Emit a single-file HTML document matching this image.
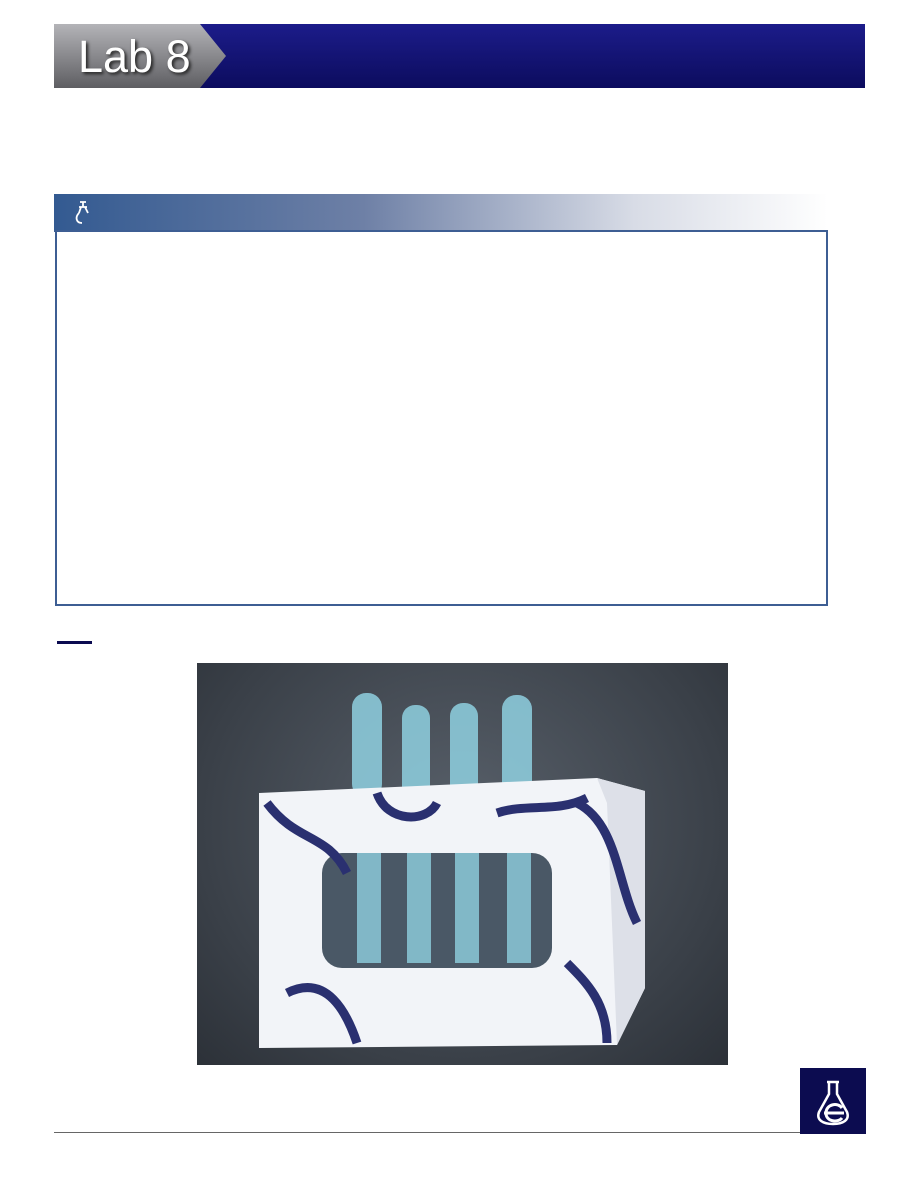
<!DOCTYPE html>
<html><head><style>
body{margin:0;width:918px;height:1188px;background:#fff;position:relative;font-family:"Liberation Sans",sans-serif;overflow:hidden}
.a{position:absolute}
</style></head><body>
<div class="a" style="left:54px;top:24px;width:811px;height:64px;background:linear-gradient(#1c1c8a,#0c0c5e)"></div>
<svg class="a" style="left:54px;top:24px" width="175" height="64"><defs><linearGradient id="g" x1="0" y1="0" x2="0" y2="1"><stop offset="0" stop-color="#b4b4b8"/><stop offset="1" stop-color="#5e5e62"/></linearGradient></defs><polygon points="0,0 146,0 172,32 146,64 0,64" fill="url(#g)"/></svg>
<div class="a" style="left:78px;top:30px;font-size:45px;color:#fff;text-shadow:2px 2px 3px #222;line-height:54px">Lab 8</div>
<div class="a" style="left:54px;top:194px;width:774px;height:37px;background:linear-gradient(90deg,#335a91,#6e80a6 40%,#d8dce6 75%,#fff)"></div>
<div class="a" style="left:54px;top:230px;width:774px;height:2px;background:#3d5e93"></div>
<svg class="a" style="left:72px;top:199px" width="20" height="28"><path d="M8 3h6M11 3v5M7 8h8M9 8l-2 6M13 8l3 6M7 14c-4 4-3 10 3 10" stroke="#fff" stroke-width="1.8" fill="none"/></svg>
<div class="a" style="left:55px;top:232px;width:769px;height:372px;border:2px solid #3d5e93;border-top:none"></div>
<div class="a" style="left:57px;top:641px;width:35px;height:3px;background:#0a0a50"></div>
<div class="a" style="left:197px;top:663px;width:531px;height:402px;background:radial-gradient(ellipse at 50% 40%,#58606a,#3a4048 70%,#2c3138)"></div>
<svg class="a" style="left:197px;top:663px" width="531" height="402">
<g fill="#8fd0e0" opacity=".85"><rect x="155" y="30" width="30" height="105" rx="14"/><rect x="205" y="42" width="28" height="95" rx="13"/><rect x="253" y="40" width="28" height="97" rx="13"/><rect x="305" y="32" width="30" height="105" rx="14"/></g>
<polygon points="62,130 400,115 448,128 448,325 420,382 62,385" fill="#f2f4f8"/>
<polygon points="400,115 448,128 448,325 420,382 410,140" fill="#dde0e8"/>
<rect x="125" y="190" width="230" height="115" rx="20" fill="#4a5866"/>
<g fill="#8fd0e0" opacity=".8"><rect x="160" y="190" width="24" height="110"/><rect x="210" y="190" width="24" height="110"/><rect x="258" y="190" width="24" height="110"/><rect x="310" y="190" width="24" height="110"/></g>
<g stroke="#2a3070" stroke-width="9" fill="none"><path d="M70 140c30 40 60 30 80 70M180 130c10 30 50 30 60 10M90 330c40-20 60 20 70 50M380 140c40 20 40 80 60 120M370 300c20 20 40 40 40 80M300 150c30-10 60 0 90-15"/></g>
</svg>
<div class="a" style="left:54px;top:1132px;width:746px;height:1px;background:#666"></div>
<div class="a" style="left:800px;top:1068px;width:66px;height:66px;background:#0c0c50"></div>
<svg class="a" style="left:800px;top:1068px" width="66" height="66"><path d="M27 14h12M29 14v12l-10 18c-3 8 4 12 14 12s17-4 14-12l-10-18V14" stroke="#fff" stroke-width="2.5" fill="none"/><path d="M24 45h20M42 40c-4-6-16-4-16 5s12 10 16 5" stroke="#fff" stroke-width="3" fill="none"/></svg>
</body></html>
